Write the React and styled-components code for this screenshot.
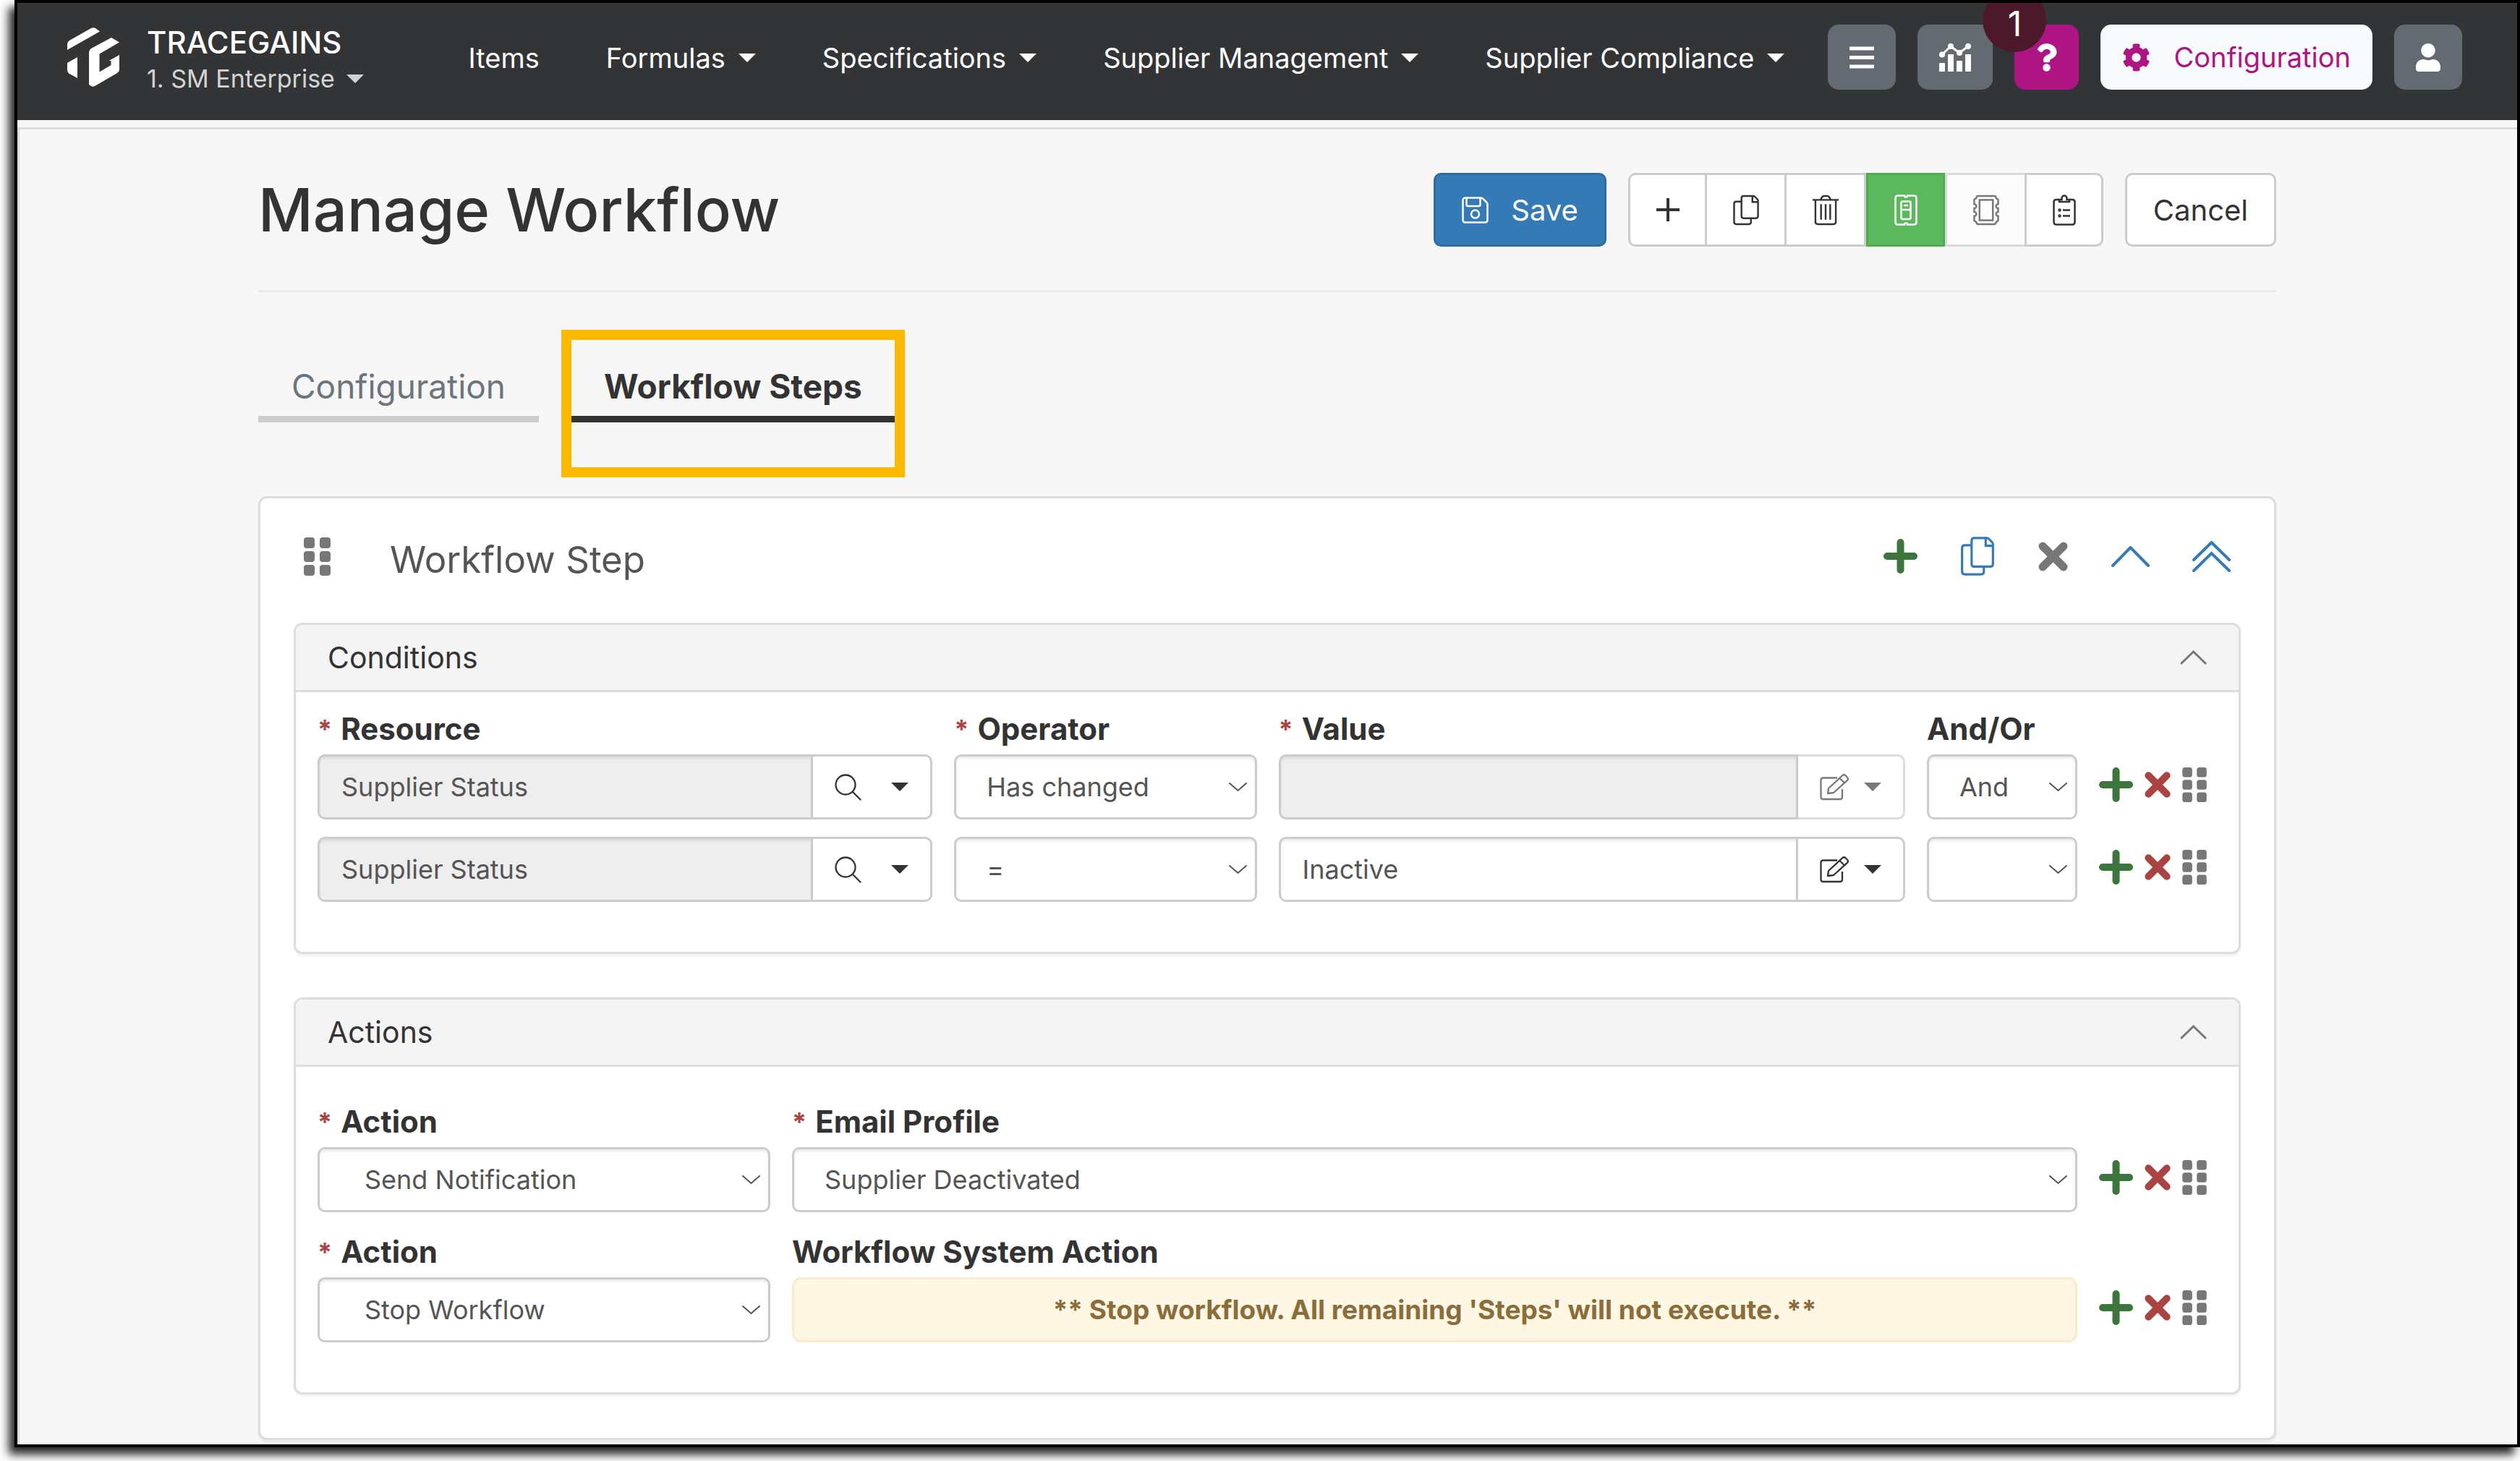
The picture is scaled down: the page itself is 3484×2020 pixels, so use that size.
import React from 'react';
import styled, { createGlobalStyle, css } from 'styled-components';
import { FaCog, FaQuestion, FaUser } from 'react-icons/fa';

const GlobalStyle = createGlobalStyle`
  *,
  *::before,
  *::after {
    box-sizing: border-box;
  }

  body {
    margin: 0;
    background: #fff;
    color: #333;
    font-family: Inter, 'Liberation Sans', sans-serif;
    font-size: 36px;
  }

  button,
  input,
  select {
    margin: 0;
    font: inherit;
    color: inherit;
  }

  button {
    padding: 0;
    border: 0;
    background: none;
    cursor: pointer;
  }

  svg {
    display: block;
    flex: none;
  }
`;

/* ---------- icons ---------- */

const Caret = () => (
  <svg width="24" height="12" viewBox="0 0 24 12" fill="currentColor">
    <path d="M0 0h24L12 12z" />
  </svg>
);

const Chevron = ({ width, height, stroke, up }) => (
  <svg
    width={width}
    height={height}
    viewBox={`0 0 ${width} ${height}`}
    fill="none"
    stroke="currentColor"
    strokeWidth={stroke}
    strokeLinecap="round"
  >
    <path
      d={
        up
          ? `M2 ${height - 2}L${width / 2} 2L${width - 2} ${height - 2}`
          : `M1 1L${width / 2} ${height - 2}L${width - 1} 1`
      }
    />
  </svg>
);

const DoubleChevron = () => (
  <svg width="53" height="43" viewBox="0 0 53 43" fill="none" stroke="currentColor" strokeWidth="4" strokeLinecap="round">
    <path d="M2 26L26.500 2L51 26M2 41L26.500 17L51 41" />
  </svg>
);

const Logo = () => (
  <svg width="72" height="82" viewBox="93 38 72 82" fill="#fff">
    <path d="M93 69v-7q0-4 3-6l30-17q3-1.500 6 0l6 4.500z" />
    <path d="M93 87l14-8v29l-11-6q-3-2-3-5z" />
    <path d="M154 52l11 6.500-27.500 16v25l16-9.500v-6h-3l14.500-8v20q0 3-3 5l-30 17.500q-3 2-6 .5l-3-2V72q0-3 3-5z" />
  </svg>
);

const Bars = () => (
  <svg width="34" height="31" viewBox="0 0 34 31" stroke="currentColor" strokeWidth="5">
    <path d="M0 3h34M0 15.500h34M0 28h34" />
  </svg>
);

const ChartMixed = () => (
  <svg width="44" height="39" viewBox="0 0 44 39" fill="currentColor">
    <rect y="27" width="8" height="12" rx="1" />
    <rect x="12" y="15" width="8" height="24" rx="1" />
    <rect x="24" y="24" width="8" height="15" rx="1" />
    <rect x="36" y="15" width="8" height="24" rx="1" />
    <circle cx="4" cy="15.500" r="4" />
    <circle cx="16" cy="4" r="4" />
    <circle cx="28" cy="13" r="4" />
    <circle cx="40" cy="4" r="4" />
    <path d="M4 15.500L16 4l12 9L40 4" fill="none" stroke="currentColor" strokeWidth="3" />
  </svg>
);

const Save = () => (
  <svg width="37" height="37" viewBox="0 0 37 37" fill="none" stroke="currentColor" strokeWidth="2.500">
    <path d="M5 1.500h21q2 0 3.500 1.500l4.500 4.500q1.500 1.500 1.500 3.500v21q0 3.500-3.500 3.500H5q-3.500 0-3.500-3.500V5q0-3.500 3.500-3.500z" />
    <path d="M6.500 2v9q0 2 2 2h15q2 0 2-2V2" />
    <circle cx="18.500" cy="24" r="5.500" />
  </svg>
);

const Plus = () => (
  <svg width="32" height="32" viewBox="0 0 32 32" stroke="currentColor" strokeWidth="4">
    <path d="M16 0v32M0 16h32" />
  </svg>
);

const Copy = ({ width, height }) => (
  <svg width={width} height={height} viewBox="0 0 37 43" fill="none" stroke="currentColor" strokeWidth="2.500">
    <path d="M11.500 9.500h-7q-3 0-3 3v26q0 3 3 3h18q3 0 3-3v-5" />
    <path d="M15 1.500h13.500q1.500 0 2.500 1l3.500 3.500q1 1 1 2.500V30q0 3-3 3H15q-3 0-3-3V4.500q0-3 3-3z" />
    <path d="M27.500 2v8h8" />
  </svg>
);

const Trash = () => (
  <svg width="36" height="43" viewBox="0 0 37 43" fill="none" stroke="currentColor" strokeWidth="2.500">
    <path d="M0 7h37M4 7v31q0 3.500 3.500 3.500h22q3.500 0 3.500-3.500V7" />
    <path d="M11 7l2.500-4q1-1.500 3-1.500h4q2 0 3 1.500L26 7M12 13v22M18.500 13v22M25 13v22" />
  </svg>
);

const TicketOn = () => (
  <svg width="32" height="43" viewBox="0 0 32 43" fill="none" stroke="currentColor" strokeWidth="2.500">
    <path d="M5 1.500h9a2 2 0 004 0h9q3.500 0 3.500 3.500v33q0 3.500-3.500 3.500h-9a2 2 0 00-4 0H5q-3.500 0-3.500-3.500V5q0-3.500 3.500-3.500z" />
    <rect x="9.500" y="9.500" width="13" height="24.500" rx="2" />
    <path d="M9.500 21h13M13 15h6" />
  </svg>
);

const TicketOff = () => (
  <svg width="36" height="43" viewBox="0 0 37 43" fill="none" stroke="currentColor" strokeWidth="2.500">
    <path d="M7 1.500h23q2.500 0 2.500 3l3 2v6.500a3 3 0 000 6v5a3 3 0 000 6v6.500l-3 2q0 3-2.500 3H7q-2.500 0-2.500-3l-3-2V30a3 3 0 000-6v-5a3 3 0 000-6V6.500l3-2q0-3 2.500-3z" />
    <rect x="9" y="7" width="19" height="29" />
  </svg>
);

const Clipboard = () => (
  <svg width="32" height="43" viewBox="0 0 32 43" fill="none" stroke="currentColor" strokeWidth="2.500">
    <path d="M9 7H5Q1.500 7 1.500 10v28q0 3.500 3.500 3.500h22q3.500 0 3.500-3.500V10q0-3-3.500-3h-4" />
    <path d="M9 7v3h14V7h-3.500V5a3.500 3.500 0 00-7 0v2z" />
    <path d="M14 21.500h10M14 29.500h10" />
    <circle cx="9.500" cy="21.500" r="1" />
    <circle cx="9.500" cy="29.500" r="1" />
  </svg>
);

const Search = () => (
  <svg width="37" height="37" viewBox="0 0 37 37" fill="none" stroke="currentColor" strokeWidth="2.300" strokeLinecap="round">
    <circle cx="15" cy="15" r="13.500" />
    <path d="M25 25l10.500 10.500" />
  </svg>
);

const Edit = () => (
  <svg width="41" height="37" viewBox="0 0 41 37" fill="none" stroke="currentColor" strokeWidth="2.300" strokeLinejoin="round">
    <path d="M24 5.500H4.500q-3 0-3 3V32q0 3 3 3H28q3 0 3-3V21" />
    <path d="M11 27l1-7L31.500 2q2-1.500 4 .2l2.500 2.500q1.800 2 .2 4L19 26z" />
    <path d="M27.500 6l7 7" />
  </svg>
);

const PlusBold = () => (
  <svg width="47" height="48" viewBox="0 0 47 48" stroke="currentColor" strokeWidth="10" strokeLinecap="round">
    <path d="M23.500 5v38M5 24h37" />
  </svg>
);

const Times = ({ size }) => (
  <svg width={size} height={size} viewBox="0 0 42 42" stroke="currentColor" strokeWidth="11" strokeLinecap="round">
    <path d="M7 7l28 28M35 7L7 35" />
  </svg>
);

const Grip = ({ width, height }) => (
  <svg width={width} height={height} viewBox="0 0 37 53" fill="currentColor">
    {[0, 19, 38].map(y => (
      <React.Fragment key={y}>
        <rect y={y} width="15" height="15" rx="4" />
        <rect x="22" y={y} width="15" height="15" rx="4" />
      </React.Fragment>
    ))}
  </svg>
);

/* ---------- window and top bar ---------- */

const Page = styled.div`
  min-height: 100vh;
  padding: 0 0 20px 20px;
`;

const Window = styled.div`
  display: flex;
  flex-direction: column;
  min-height: calc(100vh - 20px);
  border: 4px solid #000;
  background: #f7f7f7;
  box-shadow: -8px 10px 12px rgba(0, 0, 0, 0.85);
`;

const TopBar = styled.header`
  display: flex;
  align-items: flex-start;
  padding: 30px 76px 32px 69px;
  background: #333436;
  color: #fff;
  overflow: hidden;
`;

const Brand = styled.div`
  display: flex;
  align-items: flex-start;
  gap: 38px;

  > svg {
    margin-top: 4px;
  }
`;

const BrandName = styled.div`
  font-size: 42px;
  font-weight: 500;
  line-height: 50px;
`;

const Enterprise = styled.button`
  display: flex;
  align-items: center;
  gap: 16px;
  color: #d3d4d5;
  font-size: 34px;
  line-height: 50px;
`;

const Nav = styled.nav`
  display: flex;
  flex: 1;
  justify-content: flex-end;
  gap: 92px;
  margin-right: 60px;
`;

const NavLink = styled.a`
  display: flex;
  align-items: center;
  gap: 18px;
  color: #fff;
  font-size: 38px;
  line-height: 92px;
  text-decoration: none;
  white-space: nowrap;
`;

const BarButtons = styled.div`
  display: flex;
  gap: 30px;
`;

const barButtonTones = {
  grey: css`
    background: #636a72;
    color: #fff;
  `,
  pink: css`
    background: #ae1583;
    color: #fff;
  `,
  light: css`
    background: #f8f9fb;
    color: #ae1583;
  `
};

const BarButton = styled.button`
  position: relative;
  display: flex;
  align-items: center;
  gap: 32px;
  height: 90px;
  padding: 0 30px;
  border-radius: 15px;
  font-size: 38px;
  ${({ $tone }) => barButtonTones[$tone]}
`;

const HelpIcon = styled(FaQuestion)`
  width: 29px;
  height: 39px;
`;

const UserIcon = styled(FaUser)`
  width: 34px;
  height: 39px;
`;

const GearIcon = styled(FaCog)`
  width: 39px;
  height: 39px;
`;

const Badge = styled.span`
  position: absolute;
  top: -50px;
  left: -44px;
  width: 88px;
  height: 88px;
  padding-top: 20px;
  border-radius: 50%;
  background: #4c192b;
  font-size: 48px;
  line-height: 58px;
  text-align: center;
`;

/* ---------- page ---------- */

const Body = styled.main`
  flex: 1;
  margin-top: 10px;
  padding: 60px 3px 6px 0;
  border-top: 3px solid #dcdcdc;
  border-left: 3px solid #dcdcdc;
`;

const Container = styled.div`
  width: 100%;
  max-width: 2790px;
  margin: 0 auto;
`;

const PageHeader = styled.div`
  display: flex;
  justify-content: space-between;
  padding-bottom: 60px;
  border-bottom: 3px solid #ebebeb;
`;

const Title = styled.h1`
  margin: 0;
  font-size: 83px;
  font-weight: 500;
  line-height: 102px;
`;

const Toolbar = styled.div`
  display: flex;
  gap: 30px;
`;

const ButtonGroup = styled.div`
  display: flex;
`;

const buttonTones = {
  primary: css`
    border-color: #2e6da4;
    background: #337ab7;
    color: #fff;
  `,
  success: css`
    border-color: #4cae4c;
    background: #5cb85c;
    color: #fff;
  `
};

const Button = styled.button`
  display: flex;
  align-items: center;
  gap: 31px;
  height: 102px;
  padding: 0 36px;
  border: 3px solid #ccc;
  border-radius: 10px;
  background: #fff;
  font-size: 40px;
  ${({ $tone }) => buttonTones[$tone]}

  &:disabled {
    opacity: 0.65;
  }

  ${ButtonGroup} > & {
    padding: 0 35px 0 36px;
    border-radius: 0;
  }

  ${ButtonGroup} > & + & {
    margin-left: -3px;
  }

  ${ButtonGroup} > &:first-child {
    border-radius: 10px 0 0 10px;
  }

  ${ButtonGroup} > &:last-child {
    border-radius: 0 10px 10px 0;
  }
`;

const Tabs = styled.div`
  display: flex;
  gap: 44px;
  margin: 90px 0 102px;
`;

const Tab = styled.button`
  position: relative;
  padding: 0 46px;
  border-bottom: 9px solid ${({ $active }) => ($active ? '#333' : '#ccc')};
  color: ${({ $active }) => ($active ? '#333' : '#6c757d')};
  font-size: 46px;
  font-weight: ${({ $active }) => ($active ? 700 : 400)};
  line-height: 81px;
`;

const Highlight = styled.span`
  position: absolute;
  top: -38px;
  right: -13px;
  bottom: -85px;
  left: -13px;
  border: 14px solid #fcb900;
`;

const Card = styled.section`
  padding: 0 46px 60px;
  border: 3px solid #ddd;
  border-radius: 12px;
  background: #fff;
  box-shadow: 0 3px 3px rgba(0, 0, 0, 0.05);
`;

const CardHead = styled.div`
  display: flex;
  align-items: center;
  height: 160px;
  margin-bottom: 12px;
  padding: 0 14px;
  color: #777;
`;

const CardTitle = styled.h2`
  flex: 1;
  margin: 0;
  padding: 8px 0 0 82px;
  color: #555;
  font-size: 51px;
  font-weight: 400;
`;

const CardTools = styled.div`
  display: flex;
  align-items: center;
  gap: 59px;
`;

const IconButton = styled.button`
  color: ${({ $color }) => $color};
`;

const Panel = styled.section`
  border: 3px solid #ddd;
  border-radius: 12px;
  background: #fff;
  box-shadow: 0 3px 3px rgba(0, 0, 0, 0.05);

  & + & {
    margin-top: 60px;
  }
`;

const PanelHead = styled.div`
  display: flex;
  align-items: center;
  justify-content: space-between;
  padding: 0 44px;
  border-bottom: 3px solid #ddd;
  border-radius: 9px 9px 0 0;
  background: #f4f4f4;
`;

const PanelTitle = styled.h3`
  margin: 0;
  font-size: 41px;
  font-weight: 400;
  line-height: 90px;
`;

const PanelBody = styled.div`
  display: flex;
  flex-direction: column;
  gap: 24px;
  padding: ${({ $top }) => $top}px 44px 69px 30px;
`;

const Row = styled.div`
  display: grid;
  grid-template-columns: ${({ $columns }) => $columns} auto;
  align-items: end;
  gap: 30px;
`;

const Label = styled.label`
  display: flex;
  gap: 12px;
  padding-bottom: 4px;
  font-size: 42px;
  font-weight: 700;
  line-height: 62px;
`;

const Required = styled.span`
  color: #a94442;
  font-size: 36px;
`;

const field = css`
  width: 100%;
  height: 90px;
  border: 3px solid #ccc;
  border-radius: 10px;
  background: #fff;
  box-shadow: inset 0 3px 3px rgba(0, 0, 0, 0.075);
  color: #555;
  font-size: 36px;
`;

const InputGroup = styled.div`
  display: flex;
`;

const Input = styled.input`
  ${field}
  flex: 1;
  min-width: 0;
  padding: 0 30px;
  border-radius: 10px 0 0 10px;

  &:disabled {
    background: #eee;
  }
`;

const GroupButton = styled.button`
  display: flex;
  align-items: center;
  gap: ${({ $gap }) => $gap}px;
  height: 90px;
  margin-left: -3px;
  padding: 0 30px;
  border: 3px solid #ccc;
  border-radius: 0 10px 10px 0;
  background: #fff;

  &:disabled {
    opacity: 0.65;
  }
`;

const SelectWrap = styled.div`
  position: relative;
  color: #555;

  svg {
    position: absolute;
    top: 39px;
    right: 14px;
    pointer-events: none;
  }
`;

const SelectBox = styled.select`
  ${field}
  display: block;
  appearance: none;
  padding: 0 44px 0 ${({ $indent }) => $indent}px;
`;

const Warning = styled.output`
  display: block;
  border: 3px solid #faebcc;
  border-radius: 12px;
  background: #fef7e3;
  color: #8a6d3b;
  font-size: 37px;
  font-weight: 700;
  line-height: 84px;
  text-align: center;
`;

const RowTools = styled.div`
  display: flex;
  align-items: center;
  gap: 15px;
  height: 90px;
  padding-bottom: 6px;
`;

const Field = ({ label, id, required, children }) => (
  <div>
    {label && (
      <Label htmlFor={id}>
        {required && <Required>*</Required>}
        {label}
      </Label>
    )}
    {children}
  </div>
);

const Select = ({ id, name, indent = 42, value }) => (
  <SelectWrap>
    <SelectBox id={id} aria-label={name} $indent={indent} defaultValue={value}>
      <option value={value}>{value}</option>
    </SelectBox>
    <Chevron width={25} height={13} stroke={2} />
  </SelectWrap>
);

const RowActions = () => (
  <RowTools>
    <IconButton $color="#3c763d" aria-label="Add row">
      <PlusBold />
    </IconButton>
    <IconButton $color="#a94442" aria-label="Remove row">
      <Times size={38} />
    </IconButton>
    <IconButton $color="#777" aria-label="Move row">
      <Grip width={34} height={48} />
    </IconButton>
  </RowTools>
);

const navItems = [
  { label: 'Items' },
  { label: 'Formulas', menu: true },
  { label: 'Specifications', menu: true },
  { label: 'Supplier Management', menu: true },
  { label: 'Supplier Compliance', menu: true }
];

const conditions = [
  { resource: 'Supplier Status', operator: 'Has changed', value: '', locked: true, join: 'And' },
  { resource: 'Supplier Status', operator: '=', value: 'Inactive', locked: false, join: '' }
];

const conditionColumns = 'minmax(0, 850fr) minmax(0, 418fr) minmax(0, 866fr) minmax(0, 208fr)';
const actionColumns = 'minmax(0, 626fr) minmax(0, 1777fr)';

const ConditionRow = ({ condition, index }) => {
  const first = index === 0;
  return (
    <Row $columns={conditionColumns}>
      <Field label={first && 'Resource'} id={`resource-${index}`} required>
        <InputGroup>
          <Input id={`resource-${index}`} aria-label="Resource" defaultValue={condition.resource} disabled />
          <GroupButton $gap={41} aria-label="Find resource">
            <Search />
            <Caret />
          </GroupButton>
        </InputGroup>
      </Field>
      <Field label={first && 'Operator'} id={`operator-${index}`} required>
        <Select id={`operator-${index}`} name="Operator" value={condition.operator} />
      </Field>
      <Field label={first && 'Value'} id={`value-${index}`} required>
        <InputGroup>
          <Input id={`value-${index}`} aria-label="Value" defaultValue={condition.value} disabled={condition.locked} />
          <GroupButton $gap={20} aria-label="Edit value" disabled={condition.locked}>
            <Edit />
            <Caret />
          </GroupButton>
        </InputGroup>
      </Field>
      <Field label={first && 'And/Or'} id={`join-${index}`}>
        <Select id={`join-${index}`} name="And/Or" value={condition.join} />
      </Field>
      <RowActions />
    </Row>
  );
};

const App = () => (
  <Page>
    <GlobalStyle />
    <Window>
      <TopBar>
        <Brand>
          <Logo />
          <div>
            <BrandName>TRACEGAINS</BrandName>
            <Enterprise>
              1. SM Enterprise
              <Caret />
            </Enterprise>
          </div>
        </Brand>
        <Nav>
          {navItems.map(item => (
            <NavLink href="#" key={item.label}>
              {item.label}
              {item.menu && <Caret />}
            </NavLink>
          ))}
        </Nav>
        <BarButtons>
          <BarButton $tone="grey" aria-label="Menu">
            <Bars />
          </BarButton>
          <BarButton $tone="grey" aria-label="Reports">
            <ChartMixed />
          </BarButton>
          <BarButton $tone="pink" aria-label="Help">
            <HelpIcon />
            <Badge>1</Badge>
          </BarButton>
          <BarButton $tone="light">
            <GearIcon />
            Configuration
          </BarButton>
          <BarButton $tone="grey" aria-label="Account">
            <UserIcon />
          </BarButton>
        </BarButtons>
      </TopBar>

      <Body>
        <Container>
          <PageHeader>
            <Title>Manage Workflow</Title>
            <Toolbar>
              <Button $tone="primary">
                <Save />
                Save
              </Button>
              <ButtonGroup>
                <Button aria-label="Add">
                  <Plus />
                </Button>
                <Button aria-label="Copy">
                  <Copy width={36} height={43} />
                </Button>
                <Button aria-label="Delete">
                  <Trash />
                </Button>
                <Button $tone="success" aria-label="Enable">
                  <TicketOn />
                </Button>
                <Button aria-label="Disable" disabled>
                  <TicketOff />
                </Button>
                <Button aria-label="Log">
                  <Clipboard />
                </Button>
              </ButtonGroup>
              <Button>Cancel</Button>
            </Toolbar>
          </PageHeader>

          <Tabs>
            <Tab>Configuration</Tab>
            <Tab $active>
              Workflow Steps
              <Highlight />
            </Tab>
          </Tabs>

          <Card>
            <CardHead>
              <Grip width={37} height={53} />
              <CardTitle>Workflow Step</CardTitle>
              <CardTools>
                <IconButton $color="#3c763d" aria-label="Add step">
                  <PlusBold />
                </IconButton>
                <IconButton $color="#337ab7" aria-label="Copy step">
                  <Copy width={48} height={54} />
                </IconButton>
                <IconButton $color="#777" aria-label="Remove step">
                  <Times size={43} />
                </IconButton>
                <IconButton $color="#337ab7" aria-label="Collapse step">
                  <Chevron width={53} height={29} stroke={4} up />
                </IconButton>
                <IconButton $color="#337ab7" aria-label="Collapse all steps">
                  <DoubleChevron />
                </IconButton>
              </CardTools>
            </CardHead>

            <Panel>
              <PanelHead>
                <PanelTitle>Conditions</PanelTitle>
                <IconButton $color="#777" aria-label="Collapse conditions">
                  <Chevron width={37} height={20} stroke={3} up />
                </IconButton>
              </PanelHead>
              <PanelBody $top={20}>
                {conditions.map((condition, index) => (
                  <ConditionRow condition={condition} index={index} key={index} />
                ))}
              </PanelBody>
            </Panel>

            <Panel>
              <PanelHead>
                <PanelTitle>Actions</PanelTitle>
                <IconButton $color="#777" aria-label="Collapse actions">
                  <Chevron width={37} height={20} stroke={3} up />
                </IconButton>
              </PanelHead>
              <PanelBody $top={45}>
                <Row $columns={actionColumns}>
                  <Field label="Action" id="action-0" required>
                    <Select id="action-0" indent={62} value="Send Notification" />
                  </Field>
                  <Field label="Email Profile" id="email-profile" required>
                    <Select id="email-profile" value="Supplier Deactivated" />
                  </Field>
                  <RowActions />
                </Row>
                <Row $columns={actionColumns}>
                  <Field label="Action" id="action-1" required>
                    <Select id="action-1" indent={62} value="Stop Workflow" />
                  </Field>
                  <Field label="Workflow System Action" id="system-action">
                    <Warning id="system-action">** Stop workflow. All remaining 'Steps' will not execute. **</Warning>
                  </Field>
                  <RowActions />
                </Row>
              </PanelBody>
            </Panel>
          </Card>
        </Container>
      </Body>
    </Window>
  </Page>
);

export default App;
